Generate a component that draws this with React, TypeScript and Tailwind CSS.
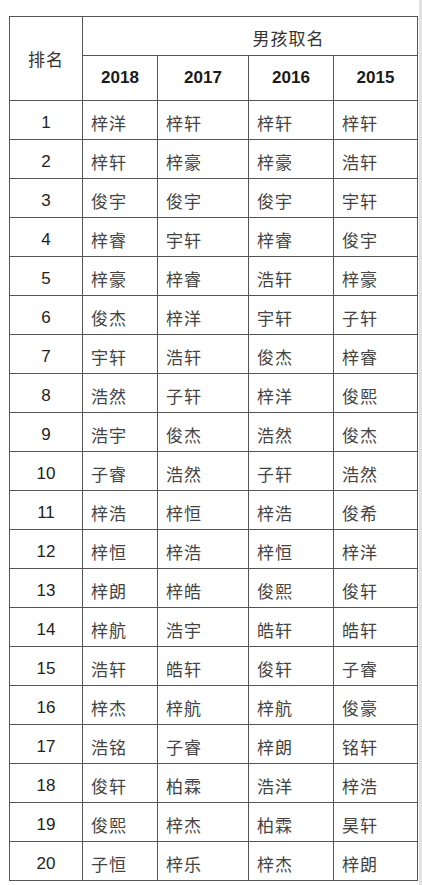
import React from "react";

const years = ["2018", "2017", "2016", "2015"];

const rows: string[][] = [
  ["梓洋", "梓轩", "梓轩", "梓轩"],
  ["梓轩", "梓豪", "梓豪", "浩轩"],
  ["俊宇", "俊宇", "俊宇", "宇轩"],
  ["梓睿", "宇轩", "梓睿", "俊宇"],
  ["梓豪", "梓睿", "浩轩", "梓豪"],
  ["俊杰", "梓洋", "宇轩", "子轩"],
  ["宇轩", "浩轩", "俊杰", "梓睿"],
  ["浩然", "子轩", "梓洋", "俊熙"],
  ["浩宇", "俊杰", "浩然", "俊杰"],
  ["子睿", "浩然", "子轩", "浩然"],
  ["梓浩", "梓恒", "梓浩", "俊希"],
  ["梓恒", "梓浩", "梓恒", "梓洋"],
  ["梓朗", "梓皓", "俊熙", "俊轩"],
  ["梓航", "浩宇", "皓轩", "皓轩"],
  ["浩轩", "皓轩", "俊轩", "子睿"],
  ["梓杰", "梓航", "梓航", "俊豪"],
  ["浩铭", "子睿", "梓朗", "铭轩"],
  ["俊轩", "柏霖", "浩洋", "梓浩"],
  ["俊熙", "梓杰", "柏霖", "昊轩"],
  ["子恒", "梓乐", "梓杰", "梓朗"],
];

const cjk = "font-['Noto_Sans_CJK_SC',sans-serif]";
const lat = "font-['Liberation_Sans','Noto_Sans_CJK_SC',sans-serif]";

export default function App() {
  return (
    <div className="flex min-h-[885px] w-[422px] bg-white">
      <div className="flex-1 pl-[9px] pt-[16px]">
        <div className="grid w-[409px] grid-cols-[72px_74px_90px_84px_83px] grid-rows-[38px_44px_repeat(20,38px)] gap-px border border-[#555] bg-[#555]">
          <div className={`row-span-2 flex items-center justify-center bg-white text-[17px] tracking-[1px] text-[#333] ${cjk}`}>
            排名
          </div>
          <div className={`col-span-4 flex items-center justify-center bg-white pl-[77px] pt-[4px] text-[17px] tracking-[1px] text-[#333] ${cjk}`}>
            男孩取名
          </div>
          {years.map((y) => (
            <div
              key={y}
              className={`flex items-center justify-center bg-white text-[17px] font-bold text-[#1a1a1a] ${lat}`}
            >
              {y}
            </div>
          ))}
          {rows.map((r, i) => (
            <React.Fragment key={i}>
              <div
                className={`flex items-center justify-center bg-white pt-[6px] text-[17px] text-[#222] ${lat}`}
              >
                {i + 1}
              </div>
              {r.map((n, j) => (
                <div
                  key={j}
                  className={`flex items-center bg-white pl-2 pt-[6px] text-[17px] tracking-[1px] text-[#444] ${cjk}`}
                >
                  {n}
                </div>
              ))}
            </React.Fragment>
          ))}
        </div>
      </div>
      <div className="w-[3px] bg-[#e2e2e2]" />
    </div>
  );
}
